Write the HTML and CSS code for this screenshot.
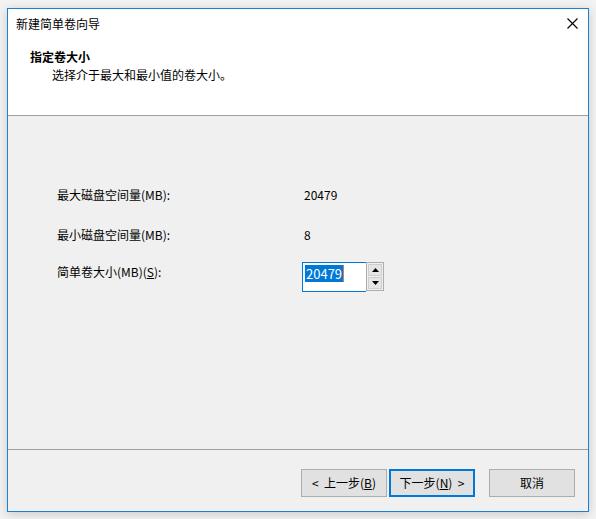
FILE: index.html
```html
<!DOCTYPE html>
<html lang="zh-CN">
<head>
<meta charset="utf-8">
<title>新建简单卷向导</title>
<link rel="stylesheet" href="styles.css">
</head>
<body>
<div class="window">
  <div class="titlebar">
    <span class="title">新建简单卷向导</span>
    <span class="close">
      <svg width="11" height="11" viewBox="0 0 11 11"><path d="M0.5 0.5 L10.5 10.5 M10.5 0.5 L0.5 10.5" stroke="#000" stroke-width="1.1" fill="none"/></svg>
    </span>
  </div>
  <div class="header">
    <div class="h-title">指定卷大小</div>
    <div class="h-sub">选择介于最大和最小值的卷大小。</div>
  </div>
  <div class="sep"></div>
  <div class="content">
    <div class="row">
      <span class="label">最大磁盘空间量(MB):</span>
      <span class="value">20479</span>
    </div>
    <div class="row row2">
      <span class="label">最小磁盘空间量(MB):</span>
      <span class="value">8</span>
    </div>
    <div class="row row3">
      <span class="label label3">简单卷大小(MB)(<u>S</u>):</span>
      <div class="spin">
        <div class="spin-input"><span class="sel">20479</span><span class="caret"></span></div>
        <div class="spin-btns">
          <div class="sbtn"><svg width="7" height="4" viewBox="0 0 7 4"><path d="M3.5 0 L7 4 L0 4 Z" fill="#000"/></svg></div>
          <div class="sbtn"><svg width="7" height="4" viewBox="0 0 7 4"><path d="M0 0 L7 0 L3.5 4 Z" fill="#000"/></svg></div>
        </div>
      </div>
    </div>
  </div>
  <div class="sep"></div>
  <div class="footer">
    <div class="btn">&lt;&nbsp; 上一步(<u>B</u>)</div>
    <div class="btn btn-default">下一步(<u>N</u>)&nbsp; &gt;</div>
    <div class="btn btn-cancel">取消</div>
  </div>
</div>
</body>
</html>
```

FILE: styles.css
```css
html, body {
  margin: 0;
  padding: 0;
}
body {
  background: #f3f3f3;
  width: 596px;
  height: 519px;
  overflow: hidden;
  font-family: "Noto Sans CJK SC", "Microsoft YaHei", sans-serif;
  font-size: 12px;
  color: #000;
}
.window {
  margin: 8px 0 0 7px;
  width: 580px;
  height: 502px;
  border: 1px solid #1c7fd4;
  background: #f0f0f0;
  box-shadow: 0 2px 10px rgba(0, 0, 0, 0.18);
  display: flex;
  flex-direction: column;
}
.titlebar {
  height: 29px;
  background: #fff;
  display: flex;
  align-items: center;
  justify-content: space-between;
  padding: 0 10px 0 8px;
  line-height: 16px;
}
.close {
  display: flex;
  align-items: center;
}
.header {
  height: 77px;
  background: #fff;
  padding: 11px 0 0 22px;
  box-sizing: border-box;
  line-height: 16px;
}
.h-title {
  font-weight: bold;
}
.h-sub {
  margin-top: 2px;
  padding-left: 22px;
}
.sep {
  height: 1px;
  background: #a0a0a0;
}
.content {
  height: 333px;
  box-sizing: border-box;
  padding: 71px 0 0 49px;
  line-height: 16px;
}
.row {
  display: flex;
  align-items: flex-start;
}
.row2 {
  margin-top: 24px;
}
.row3 {
  margin-top: 19px;
}
.label {
  width: 247px;
}
.label3 {
  margin-top: 2px;
  width: 245px;
}
.spin {
  display: flex;
  height: 30px;
}
.spin-input {
  width: 64px;
  height: 30px;
  border: 1px solid #0078d7;
  border-right: none;
  background: #fff;
  display: flex;
  align-items: flex-start;
  padding: 2px 0 0 2px;
  box-sizing: border-box;
}
.sel {
  background: #0078d7;
  color: #fff;
  font-size: 13px;
  line-height: 17px;
  padding: 0 1px;
}
.caret {
  width: 1px;
  height: 17px;
  background: #e07a3c;
}
.spin-btns {
  width: 18px;
  height: 29px;
  border: 1px solid #adadad;
  box-sizing: border-box;
  background: #f0f0f0;
  display: flex;
  flex-direction: column;
  padding: 1px;
  gap: 1px;
}
.sbtn {
  flex: 1;
  background: #e5e5e5;
  border: 1px solid #cfcfcf;
  display: flex;
  align-items: center;
  justify-content: center;
}
.footer {
  flex: 1;
  display: flex;
  align-items: flex-start;
  padding: 19px 0 0 293px;
}
.btn {
  width: 86px;
  height: 28px;
  box-sizing: border-box;
  border: 1px solid #adadad;
  background: #e1e1e1;
  display: flex;
  align-items: center;
  justify-content: center;
  line-height: 16px;
  margin-right: 2px;
}
.btn-default {
  border: 2px solid #0078d7;
}
.btn-cancel {
  margin-left: 12px;
}
u {
  text-decoration: underline;
  text-underline-offset: 1px;
}
```
